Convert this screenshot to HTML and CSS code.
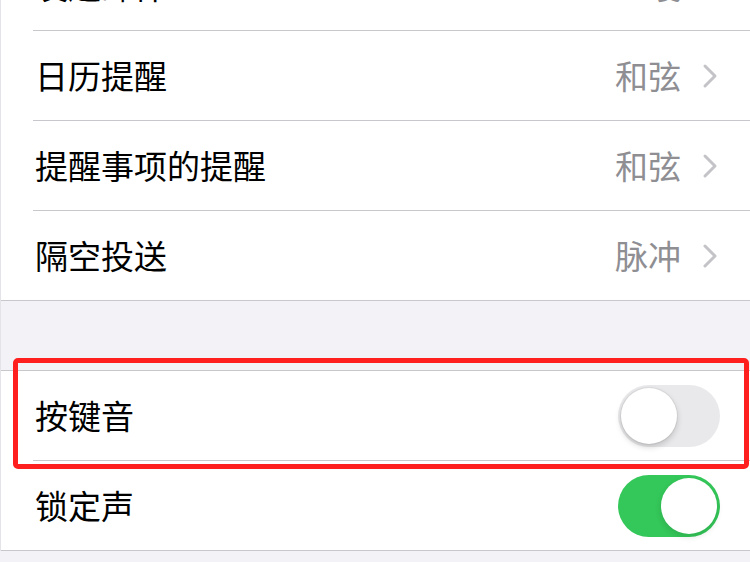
FILE: index.html
```html
<!DOCTYPE html>
<html lang="zh-CN">
  <head>
    <meta charset="UTF-8" />
    <meta name="viewport" content="width=device-width, initial-scale=1.0" />
    <title>声音</title>
    <link rel="stylesheet" href="styles.css">
  </head>
  <body>
    <div class="group first">
      <div class="row">
        <div class="row-inner">
          <span class="label">发送邮件</span>
          <span class="value">嗖</span>
          <svg class="chevron" viewBox="0 0 16 26"><path d="M3 3 L13 13 L3 23" /></svg>
        </div>
      </div>
      <div class="row">
        <div class="row-inner">
          <span class="label">日历提醒</span>
          <span class="value">和弦</span>
          <svg class="chevron" viewBox="0 0 16 26"><path d="M3 3 L13 13 L3 23" /></svg>
        </div>
      </div>
      <div class="row">
        <div class="row-inner">
          <span class="label">提醒事项的提醒</span>
          <span class="value">和弦</span>
          <svg class="chevron" viewBox="0 0 16 26"><path d="M3 3 L13 13 L3 23" /></svg>
        </div>
      </div>
      <div class="row">
        <div class="row-inner">
          <span class="label">隔空投送</span>
          <span class="value">脉冲</span>
          <svg class="chevron" viewBox="0 0 16 26"><path d="M3 3 L13 13 L3 23" /></svg>
        </div>
      </div>
    </div>

    <div class="group">
      <div class="row highlighted">
        <div class="row-inner">
          <span class="label">按键音</span>
          <span class="switch"><span class="knob"></span></span>
        </div>
      </div>
      <div class="row">
        <div class="row-inner">
          <span class="label">锁定声</span>
          <span class="switch on"><span class="knob"></span></span>
        </div>
      </div>
    </div>
  </body>
</html>
```

FILE: styles.css
```css
body {
  margin: 0;
  background-color: #f2f2f7;
  font-family: "Noto Sans CJK SC", "Noto Sans", sans-serif;
  overflow: hidden;
  border-left: 1px solid #e4e4e8;
}
.group {
  background-color: white;
  border-bottom: 1px solid #c8c7cc;
}
.group.first {
  margin-top: -59px;
  margin-bottom: 69px;
}
.group + .group {
  border-top: 1px solid #c8c7cc;
}
.row {
  position: relative;
  padding-left: 32px;
}
.row-inner {
  height: 89px;
  display: flex;
  align-items: center;
  padding-right: 32px;
  border-bottom: 1px solid #c8c7cc;
}
.row:last-child .row-inner {
  border-bottom: none;
}
.label {
  flex: 1;
  font-size: 33px;
  color: black;
  padding-left: 2px;
  margin-top: -2px;
}
.value {
  font-size: 33px;
  color: #8e8e93;
  margin-top: -2px;
}
.chevron {
  width: 16px;
  height: 26px;
  margin-left: 21px;
}
.chevron path {
  fill: none;
  stroke: #c4c4c8;
  stroke-width: 3;
  stroke-linecap: round;
  stroke-linejoin: round;
}
.switch {
  position: relative;
  width: 102px;
  height: 62px;
  border-radius: 31px;
  background-color: #e9e9eb;
  box-sizing: border-box;
  margin-right: -2px;
}
.switch .knob {
  position: absolute;
  top: 3px;
  left: 3px;
  width: 56px;
  height: 56px;
  border-radius: 50%;
  background-color: white;
  box-shadow: 0 3px 6px rgba(0, 0, 0, 0.18), 0 0 0 1px rgba(0, 0, 0, 0.05);
}
.switch.on {
  background-color: #34c759;
}
.switch.on .knob {
  left: auto;
  right: 3px;
  box-shadow: 0 3px 6px rgba(0, 0, 0, 0.12);
}
.highlighted::before {
  content: "";
  position: absolute;
  left: 12px;
  right: 1px;
  top: -13px;
  bottom: -8px;
  border: 5px solid #fe1f1f;
  border-radius: 5px;
  pointer-events: none;
  z-index: 1;
}
```
